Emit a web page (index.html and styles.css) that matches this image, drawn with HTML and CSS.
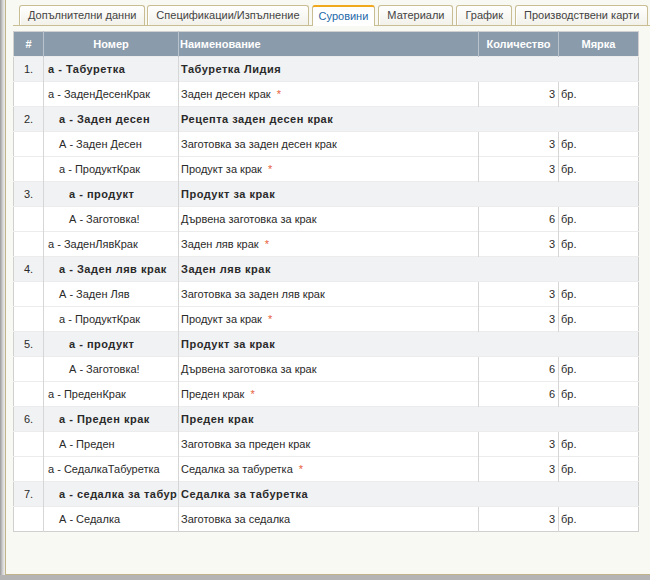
FILE: index.html
```html
<!DOCTYPE html>
<html>
<head>
<meta charset="utf-8">
<link rel="stylesheet" href="styles.css">
</head>
<body>
<div class="frame">
  <div class="edge"></div>
  <div class="panel">
    <div class="tabs">
      <div class="tab">Допълнителни данни</div>
      <div class="tab">Спецификации/Изпълнение</div>
      <div class="tab active">Суровини</div>
      <div class="tab">Материали</div>
      <div class="tab">График</div>
      <div class="tab">Производствени карти</div>
      <div class="tab stub"></div>
    </div>
    <table class="grid">
      <colgroup>
        <col class="c-num"><col class="c-code"><col class="c-name"><col class="c-qty"><col class="c-unit">
      </colgroup>
      <thead>
        <tr><th>#</th><th>Номер</th><th class="left">Наименование</th><th>Количество</th><th>Мярка</th></tr>
      </thead>
      <tbody>
        <tr class="grp"><td class="num">1.</td><td class="l0">а - Табуретка</td><td colspan="3">Табуретка Лидия</td></tr>
        <tr><td></td><td class="l0">а - ЗаденДесенКрак</td><td>Заден десен крак <span class="req">*</span></td><td class="qty">3</td><td>бр.</td></tr>
        <tr class="grp"><td class="num">2.</td><td class="l1">а - Заден десен</td><td colspan="3">Рецепта заден десен крак</td></tr>
        <tr><td></td><td class="l1">А - Заден Десен</td><td>Заготовка за заден десен крак</td><td class="qty">3</td><td>бр.</td></tr>
        <tr><td></td><td class="l1">а - ПродуктКрак</td><td>Продукт за крак <span class="req">*</span></td><td class="qty">3</td><td>бр.</td></tr>
        <tr class="grp"><td class="num">3.</td><td class="l2">а - продукт</td><td colspan="3">Продукт за крак</td></tr>
        <tr><td></td><td class="l2">А - Заготовка!</td><td>Дървена заготовка за крак</td><td class="qty">6</td><td>бр.</td></tr>
        <tr><td></td><td class="l0">а - ЗаденЛявКрак</td><td>Заден ляв крак <span class="req">*</span></td><td class="qty">3</td><td>бр.</td></tr>
        <tr class="grp"><td class="num">4.</td><td class="l1">а - Заден ляв крак</td><td colspan="3">Заден ляв крак</td></tr>
        <tr><td></td><td class="l1">А - Заден Ляв</td><td>Заготовка за заден ляв крак</td><td class="qty">3</td><td>бр.</td></tr>
        <tr><td></td><td class="l1">а - ПродуктКрак</td><td>Продукт за крак <span class="req">*</span></td><td class="qty">3</td><td>бр.</td></tr>
        <tr class="grp"><td class="num">5.</td><td class="l2">а - продукт</td><td colspan="3">Продукт за крак</td></tr>
        <tr><td></td><td class="l2">А - Заготовка!</td><td>Дървена заготовка за крак</td><td class="qty">6</td><td>бр.</td></tr>
        <tr><td></td><td class="l0">а - ПреденКрак</td><td>Преден крак <span class="req">*</span></td><td class="qty">6</td><td>бр.</td></tr>
        <tr class="grp"><td class="num">6.</td><td class="l1">а - Преден крак</td><td colspan="3">Преден крак</td></tr>
        <tr><td></td><td class="l1">А - Преден</td><td>Заготовка за преден крак</td><td class="qty">3</td><td>бр.</td></tr>
        <tr><td></td><td class="l0">а - СедалкаТабуретка</td><td>Седалка за табуретка <span class="req">*</span></td><td class="qty">3</td><td>бр.</td></tr>
        <tr class="grp"><td class="num">7.</td><td class="l1">а - седалка за табур</td><td colspan="3">Седалка за табуретка</td></tr>
        <tr><td></td><td class="l1">А - Седалка</td><td>Заготовка за седалка</td><td class="qty">3</td><td>бр.</td></tr>
      </tbody>
    </table>
  </div>
</div>
</body>
</html>
```
FILE: styles.css
```css
html, body {
  margin: 0;
  padding: 0;
  background: #b4b4b4;
  font-family: "Liberation Sans", Arial, sans-serif;
  font-size: 11px;
  color: #222;
}
.frame {
  display: flex;
  height: 575px;
  width: 650px;
  overflow: hidden;
}
.edge {
  width: 5px;
  flex: none;
  background: linear-gradient(to right, #9a9a9a, #d8d8d8 60%, #ececec);
}
.panel {
  flex: 1;
  background: #f9f9f3;
  border-left: 1px solid #c2b48a;
  border-bottom: 1px solid #c2b48a;
  padding: 5px 0 0 7px;
  overflow: hidden;
  min-width: 0;
}
.tabs {
  display: flex;
  gap: 3px;
  padding-left: 6px;
  border-bottom: 1px solid #c9bd94;
  height: 20px;
  white-space: nowrap;
  margin-right: -40px;
}
.tab {
  flex: none;
  height: 19px;
  line-height: 19px;
  padding: 0 8px;
  border: 1px solid #c9bd94;
  border-bottom: none;
  border-radius: 3px 3px 0 0;
  background: linear-gradient(#ffffff, #f2f1ea);
  color: #444;
  box-shadow: inset 1px 0 0 #fff;
}
.tab:first-child { margin-right: -1px; }
.tab.stub { width: 40px; }
.tab.active {
  background: #ffffff;
  color: #1d68a8;
  border-top: 2px solid #f0a81c;
  line-height: 18px;
  margin-bottom: -1px;
  height: 19px;
  padding: 0 6px;
}
.grid {
  margin-top: 5px;
  width: 625px;
  border-collapse: collapse;
  table-layout: fixed;
  background: #fff;
  border: 1px solid #d0d0d0;
}
.c-num { width: 30px; }
.c-code { width: 135px; }
.c-name { width: 300px; }
.c-qty { width: 80px; }
.c-unit { width: 80px; }
.grid th {
  background: #8a9bab;
  color: #fff;
  font-weight: bold;
  height: 24px;
  padding: 0 3px;
  text-align: center;
  border-left: 1px solid #b8c3cd;
  white-space: nowrap;
  overflow: hidden;
}
.grid th:first-child { border-left: none; }
.grid th.left { text-align: left; padding-left: 1px; }
.grid td {
  height: 24px;
  padding: 0 2px;
  border-left: 1px solid #d6d6d6;
  border-top: 1px solid #ececec;
  white-space: nowrap;
  overflow: hidden;
  text-overflow: clip;
  color: #2a2a2a;
}
.grid td:first-child { border-left: none; }
.grp td {
  background: #f1f2f4;
  font-weight: bold;
  letter-spacing: 0.5px;
}
.grp td.num { font-weight: normal; text-align: center; letter-spacing: 0; }
.grid td.l0 { padding-left: 4px; }
.grid td.l1 { padding-left: 15px; }
.grid td.l2 { padding-left: 25px; }
.grid td.qty { text-align: right; padding-right: 3px; }
.req {
  color: #e8603c;
  margin-left: 3px;
}
```
